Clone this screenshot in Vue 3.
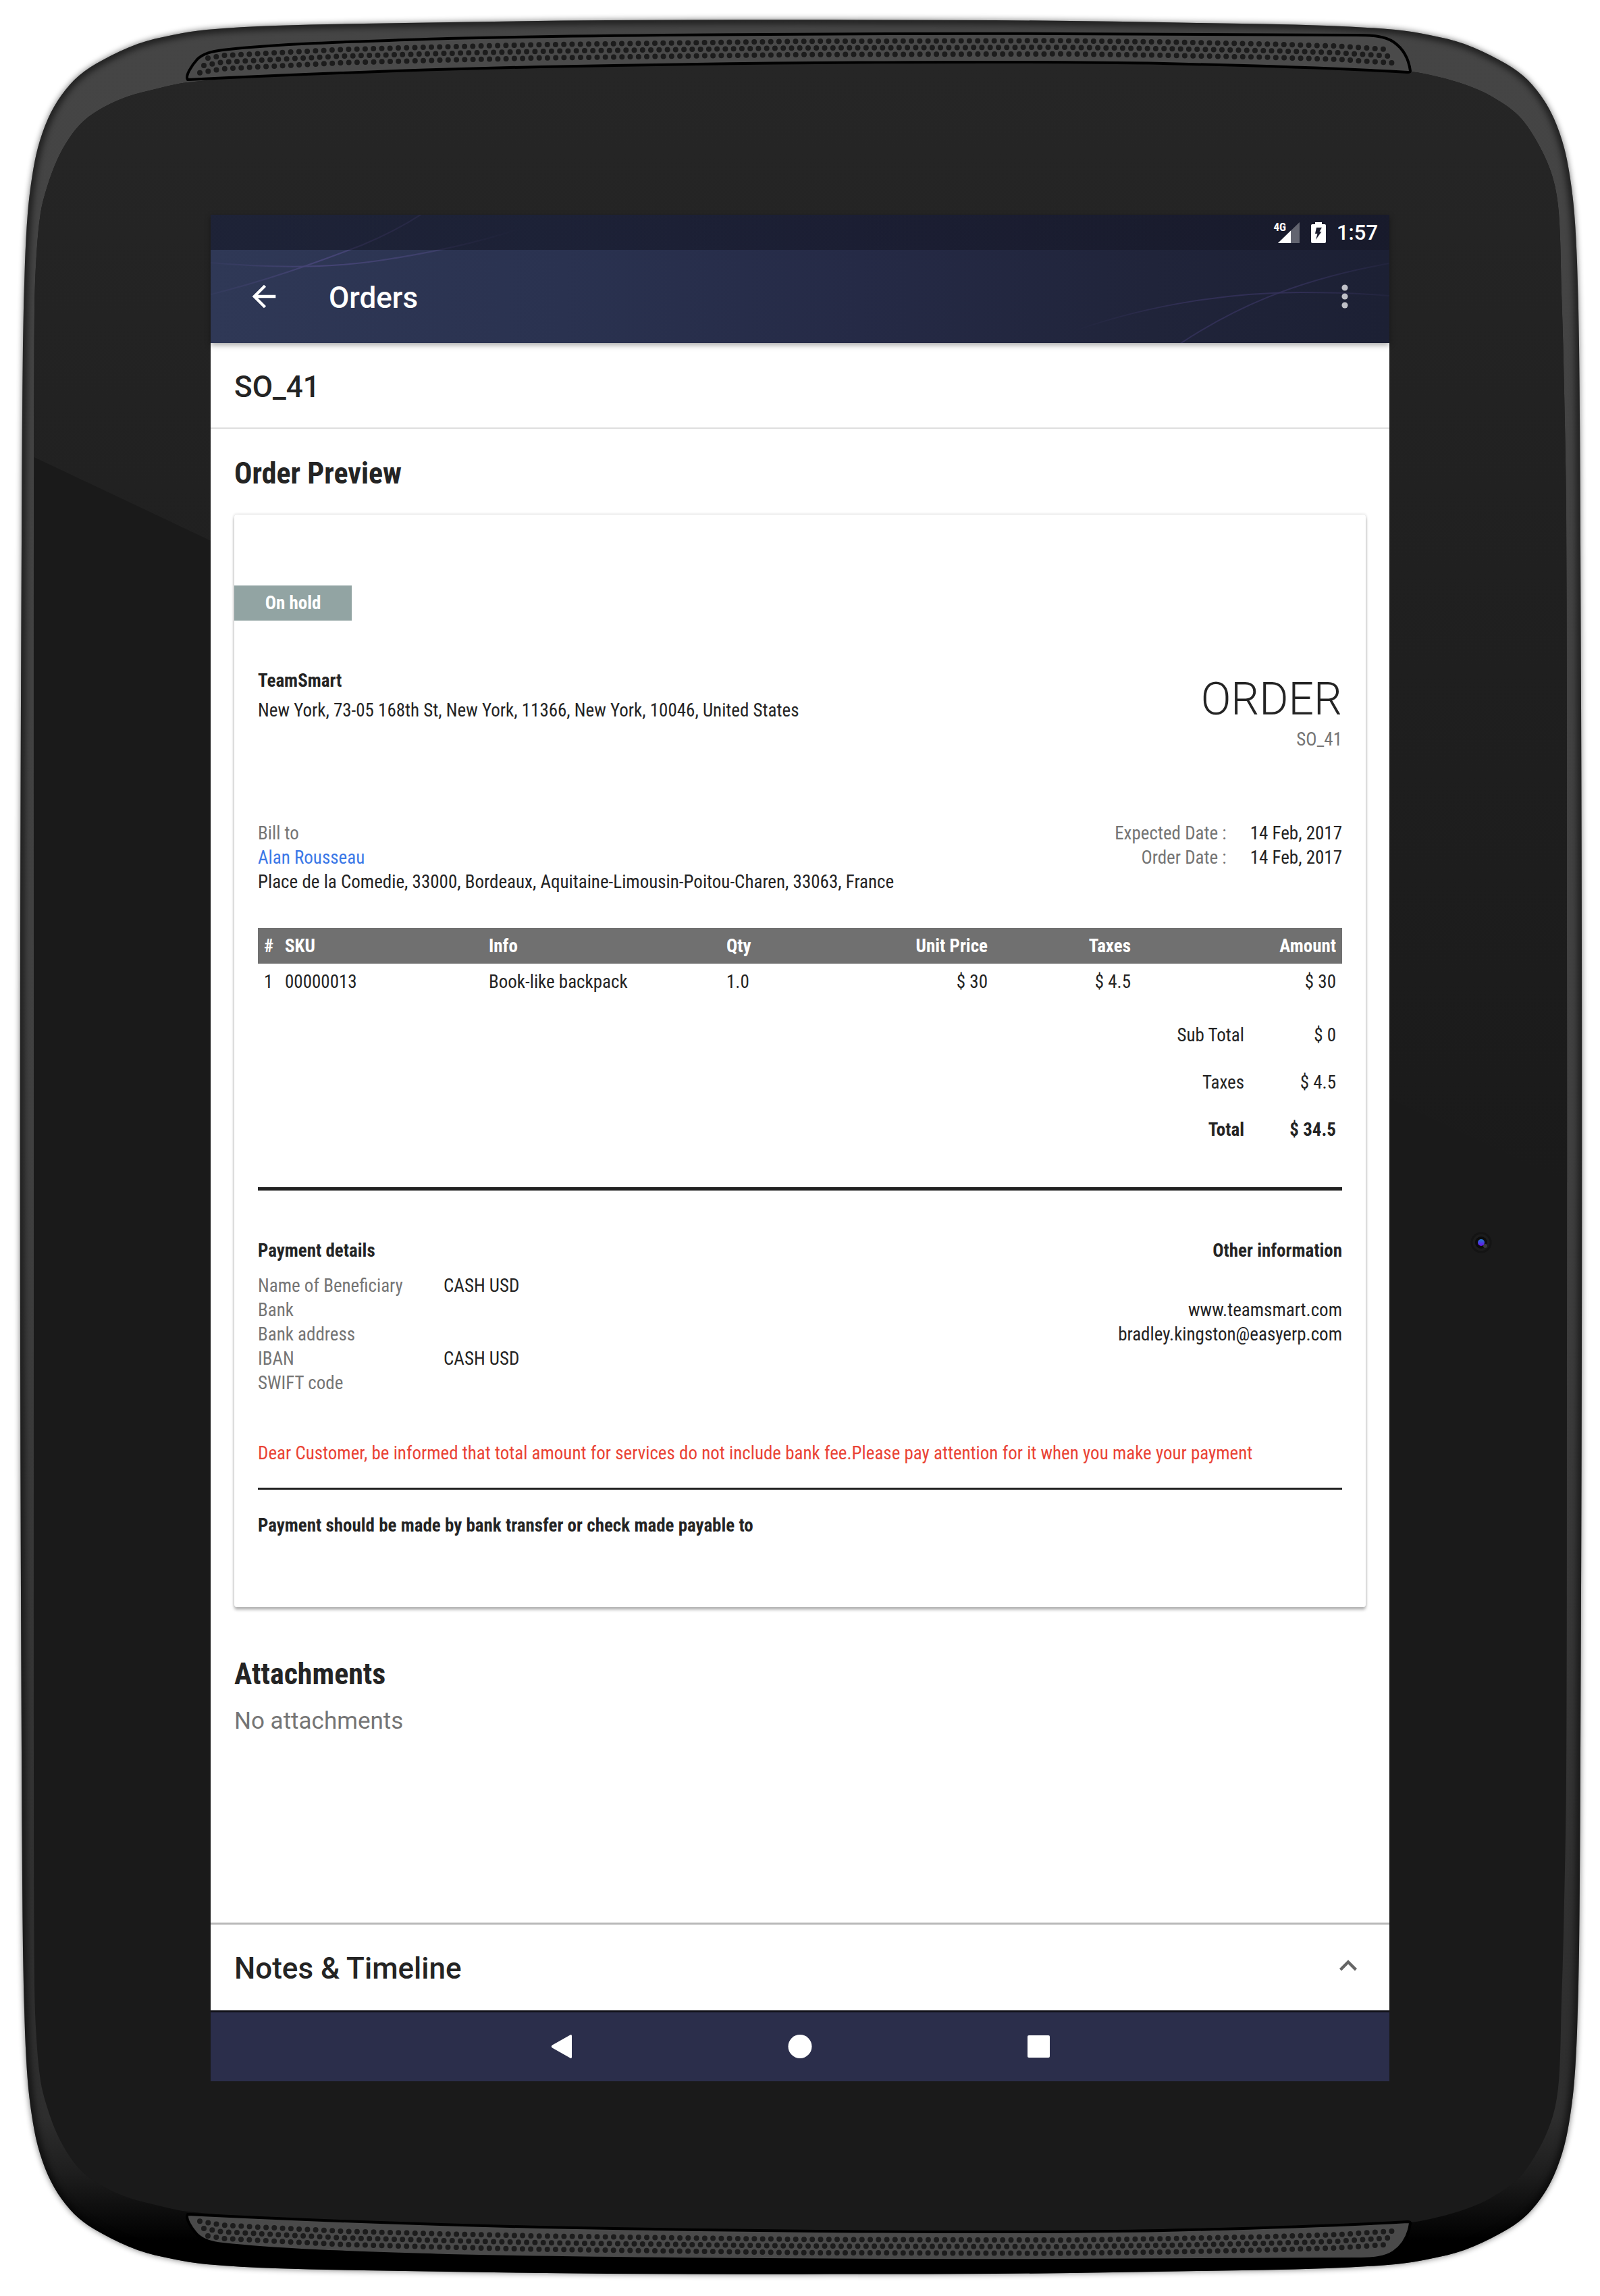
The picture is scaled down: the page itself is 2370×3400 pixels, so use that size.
<script setup>
/* ---------- order data ---------- */
const order = {
  number: 'SO_41',
  status: 'On hold',
  company: 'TeamSmart',
  companyAddress: 'New York, 73-05 168th St, New York, 11366, New York, 10046, United States',
  customer: 'Alan Rousseau',
  customerAddress: 'Place de la Comedie, 33000, Bordeaux, Aquitaine-Limousin-Poitou-Charen, 33063, France',
}

const dates = [
  { label: 'Expected Date :', value: '14 Feb, 2017' },
  { label: 'Order Date :', value: '14 Feb, 2017' },
]

const items = [
  { sku: '00000013', info: 'Book-like backpack', qty: '1.0', price: '$ 30', taxes: '$ 4.5', amount: '$ 30' },
]

const totals = [
  { label: 'Sub Total', value: '$ 0' },
  { label: 'Taxes', value: '$ 4.5' },
  { label: 'Total', value: '$ 34.5', strong: true },
]

const payment = [
  { label: 'Name of Beneficiary', value: 'CASH USD' },
  { label: 'Bank', value: '' },
  { label: 'Bank address', value: '' },
  { label: 'IBAN', value: 'CASH USD' },
  { label: 'SWIFT code', value: '' },
]

/* ---------- tablet artwork ---------- */
const W = 2373
const H = 3397

// Quarter outlines, each from the side edge's middle to the top edge's middle.
const shellQuarter = [
  [30, 1400], [32, 800], [34, 510], [37, 388], [41, 316], [47, 265], [56, 219], [71, 176], [91, 141],
  [117, 112], [152, 89], [204, 65], [255, 52], [306, 44], [408, 38], [600, 34], [900, 30],
]
const faceLeft = [
  [50, 1400], [50, 800], [51, 459], [54, 378], [60, 316], [70, 276], [85, 236], [103, 204],
  [124, 179], [153, 159], [189, 143], [230, 132], [278, 122], [408, 112], [663, 103], [900, 98],
]
const faceRight = [
  [52, 1400], [53, 765], [57, 536], [60, 434], [64, 316], [73, 263], [94, 214],
  [124, 171], [165, 142], [201, 126], [242, 114], [284, 106], [450, 100], [650, 96], [900, 92],
]

// The lower half mirrors the upper one.
function outline(left, right) {
  const topRight = right.map(([x, y]) => [W - x, y]).reverse()
  const bottomRight = right.map(([x, y]) => [W - x, H - y])
  const bottomLeft = left.map(([x, y]) => [x, H - y]).reverse()
  return [...left, ...topRight, ...bottomRight, ...bottomLeft]
}

function smoothClosed(p) {
  const n = p.length
  const f = (v) => Math.round(v * 10) / 10
  let d = `M${p[0][0]} ${p[0][1]}`
  for (let i = 0; i < n; i++) {
    const a = p[(i - 1 + n) % n]
    const b = p[i]
    const c = p[(i + 1) % n]
    const e = p[(i + 2) % n]
    const seg = Math.hypot(c[0] - b[0], c[1] - b[1])
    const tangent = (u, v) => {
      const len = Math.hypot(v[0] - u[0], v[1] - u[1]) || 1
      return [((v[0] - u[0]) / len) * seg / 3, ((v[1] - u[1]) / len) * seg / 3]
    }
    const t1 = tangent(a, c)
    const t2 = tangent(b, e)
    d += `C${f(b[0] + t1[0])} ${f(b[1] + t1[1])} ${f(c[0] - t2[0])} ${f(c[1] - t2[1])} ${c[0]} ${c[1]}`
  }
  return d + 'Z'
}

const shellPath = smoothClosed(outline(shellQuarter, shellQuarter))
const facePath = smoothClosed(outline(faceLeft, faceRight))

const grillePath =
  'M278 118C274 112 284 97 292 88C301 79 314 76 330 74C420 64 540 61 663 57C860 52 1300 49 1570 50' +
  'L2009 52C2035 52 2052 54 2064 62C2080 73 2087 90 2089 105C2089 107 2087 107 2085 107' +
  'C1980 101 1850 97 1723 94C1500 90 1150 92 800 99C620 103 440 110 278 118Z'

const spine = [[296, 98], [330, 92], [408, 88], [510, 83], [663, 79], [800, 76], [1185, 71], [1570, 70], [1723, 72], [1876, 75], [1980, 78], [2072, 84]]
function spineY(x) {
  for (let i = 1; i < spine.length; i++) {
    const [x0, y0] = spine[i - 1]
    const [x1, y1] = spine[i]
    if (x <= x1) return y0 + ((y1 - y0) * (x - x0)) / (x1 - x0)
  }
  return spine[spine.length - 1][1]
}
const holes = []
for (let i = 0; i < 145; i++) {
  const x = 296 + i * 12.26
  if (x < 2068) holes.push([x, spineY(x) + 9.8])
  if (x + 6 < 2062) holes.push([x + 6, spineY(x + 6)])
  if (x + 12 < 2056) holes.push([x + 12, spineY(x + 12) - 9.8])
}
const holesPath = holes
  .map(([x, y]) => `M${(x - 4).toFixed(1)} ${y.toFixed(1)}a4 4 0 1 0 8 0a4 4 0 1 0-8 0`)
  .join('')
</script>

<template>
  <div class="tablet">
    <svg class="shell" viewBox="0 0 2370 3400" preserveAspectRatio="none" aria-hidden="true">
      <defs>
        <linearGradient id="shellFill" x1="0" y1="0" x2="0" y2="1">
          <stop offset="0" stop-color="#454545" />
          <stop offset="0.5" stop-color="#404040" />
          <stop offset="0.85" stop-color="#303030" />
          <stop offset="0.93" stop-color="#2e2e2e" />
          <stop offset="0.955" stop-color="#1e1e1e" />
          <stop offset="0.975" stop-color="#0a0a0a" />
          <stop offset="0.985" stop-color="#000" />
        </linearGradient>
        <linearGradient id="glare" gradientUnits="userSpaceOnUse" x1="0" y1="100" x2="0" y2="1750">
          <stop offset="0" stop-color="#262626" />
          <stop offset="0.45" stop-color="#202020" />
          <stop offset="1" stop-color="#1a1a1a" />
        </linearGradient>
        <linearGradient id="lens" x1="0" y1="0" x2="0" y2="1">
          <stop offset="0" stop-color="#2277cc" />
          <stop offset="1" stop-color="#6a11ee" />
        </linearGradient>
        <clipPath id="shellClip"><path :d="shellPath" /></clipPath>
        <clipPath id="faceClip"><path :d="facePath" /></clipPath>
        <filter id="soft" x="-5%" y="-5%" width="110%" height="110%"><feGaussianBlur stdDeviation="5" /></filter>
        <filter id="edge" x="-5%" y="-5%" width="110%" height="110%"><feGaussianBlur stdDeviation="5" /></filter>
      </defs>

      <path :d="shellPath" fill="#000" opacity="0.55" filter="url(#soft)" />
      <path :d="shellPath" fill="url(#shellFill)" />
      <g clip-path="url(#shellClip)">
        <path :d="shellPath" fill="none" stroke="#000" stroke-width="12" opacity="0.55" filter="url(#edge)" />
      </g>
      <path :d="facePath" fill="#1a1a1a" />
      <path d="M0 653L2370 1774V0H0Z" fill="url(#glare)" clip-path="url(#faceClip)" />

      <g>
        <path :d="grillePath" fill="#4a4a4a" stroke="#000" stroke-width="4" />
        <path :d="holesPath" fill="#1c1c1c" />
      </g>
      <g transform="matrix(1 0 0 -1 0 3397)">
        <path :d="grillePath" fill="#4a4a4a" stroke="#000" stroke-width="4" />
        <path :d="holesPath" fill="#1c1c1c" />
      </g>

      <circle cx="2194" cy="1840" r="14" fill="#1c1c1c" stroke="#141414" stroke-width="3" />
      <circle cx="2194" cy="1840" r="9" fill="#0c0c0c" />
      <circle cx="2200" cy="1845" r="3" fill="#3a3a3a" />
      <circle cx="2194" cy="1840" r="5" fill="url(#lens)" />
    </svg>

    <div class="screen">
      <header class="top">
        <svg class="swirl" viewBox="0 0 1746 190" preserveAspectRatio="none" aria-hidden="true">
          <defs>
            <linearGradient id="fadeL" gradientUnits="userSpaceOnUse" x1="0" y1="0" x2="460" y2="0">
              <stop offset="0" stop-color="#454475" stop-opacity="0.15" />
              <stop offset="0.35" stop-color="#454475" />
              <stop offset="0.7" stop-color="#454475" stop-opacity="0.7" />
              <stop offset="1" stop-color="#454475" stop-opacity="0" />
            </linearGradient>
            <linearGradient id="fadeR" gradientUnits="userSpaceOnUse" x1="1280" y1="0" x2="1746" y2="0">
              <stop offset="0" stop-color="#35325c" stop-opacity="0" />
              <stop offset="0.35" stop-color="#35325c" stop-opacity="0.8" />
              <stop offset="0.7" stop-color="#35325c" stop-opacity="0.8" />
              <stop offset="1" stop-color="#35325c" stop-opacity="0.2" />
            </linearGradient>
          </defs>
          <g fill="none" stroke-width="2">
            <path d="M0 71C80 78 170 80 249 68C330 56 400 40 460 20" stroke="url(#fadeL)" />
            <path d="M0 118C80 98 140 77 224 45C260 30 290 14 314 -2" stroke="url(#fadeL)" />
            <path d="M1282 171C1400 130 1520 115 1615 115C1670 115 1710 117 1746 120" stroke="url(#fadeR)" />
            <path d="M1436 191C1510 142 1600 98 1746 72" stroke="url(#fadeR)" />
          </g>
        </svg>

        <div class="status-bar">
          <span class="signal">
            <span class="net">4G</span>
            <svg width="32" height="31" viewBox="0 0 32 31" aria-hidden="true">
              <path d="M32 0V31H0Z" fill="#fff" opacity="0.32" />
              <path d="M19 12.600V31H0Z" fill="#fff" />
            </svg>
          </span>
          <svg class="battery" width="22" height="31" viewBox="0 0 22 31" aria-hidden="true">
            <path d="M6 0H16V3H20Q22 3 22 5V29Q22 31 20 31H2Q0 31 0 29V5Q0 3 2 3H6Z" fill="#fff" />
            <path d="M8 8H16L12.500 14H15.500L7 26L9.500 17H6Z" fill="#1b1d2f" />
          </svg>
          <time class="clock">1:57</time>
        </div>

        <div class="app-bar">
          <button class="icon-button" type="button" aria-label="Back">
            <svg viewBox="0 0 24 24" aria-hidden="true">
              <path d="M20 11H7.830l5.590-5.590L12 4l-8 8 8 8 1.410-1.410L7.830 13H20v-2z" fill="#fff" />
            </svg>
          </button>
          <h1 class="bar-title">Orders</h1>
          <button class="icon-button" type="button" aria-label="More options">
            <svg viewBox="0 0 24 24" aria-hidden="true">
              <g fill="#bfc0c7">
                <circle cx="12" cy="6" r="2.100" /><circle cx="12" cy="12" r="2.100" /><circle cx="12" cy="18" r="2.100" />
              </g>
            </svg>
          </button>
        </div>
      </header>

      <h2 class="order-number">{{ order.number }}</h2>

      <main class="content">
        <h3 class="section-title">Order Preview</h3>

        <article class="card">
          <span class="badge">{{ order.status }}</span>

          <div class="card-body">
            <div class="split">
              <div>
                <p class="company">{{ order.company }}</p>
                <p>{{ order.companyAddress }}</p>
              </div>
              <div class="doc">
                <p class="doc-type">ORDER</p>
                <p class="muted">{{ order.number }}</p>
              </div>
            </div>

            <div class="split parties">
              <div>
                <p class="muted">Bill to</p>
                <p><a class="customer" href="#customer">{{ order.customer }}</a></p>
                <p>{{ order.customerAddress }}</p>
              </div>
              <dl class="dates">
                <template v-for="d in dates" :key="d.label">
                  <dt>{{ d.label }}</dt>
                  <dd>{{ d.value }}</dd>
                </template>
              </dl>
            </div>

            <table class="items">
              <colgroup>
                <col class="c-num" /><col class="c-sku" /><col class="c-info" /><col class="c-qty" />
                <col class="c-price" /><col class="c-taxes" /><col />
              </colgroup>
              <thead>
                <tr>
                  <th>#</th><th>SKU</th><th>Info</th><th>Qty</th>
                  <th class="num">Unit Price</th><th class="num">Taxes</th><th class="num">Amount</th>
                </tr>
              </thead>
              <tbody>
                <tr v-for="(it, i) in items" :key="it.sku">
                  <td>{{ i + 1 }}</td><td>{{ it.sku }}</td><td>{{ it.info }}</td><td>{{ it.qty }}</td>
                  <td class="num">{{ it.price }}</td><td class="num">{{ it.taxes }}</td><td class="num">{{ it.amount }}</td>
                </tr>
              </tbody>
            </table>

            <dl class="totals">
              <div v-for="t in totals" :key="t.label" class="total-row" :class="{ strong: t.strong }">
                <dt>{{ t.label }}</dt>
                <dd>{{ t.value }}</dd>
              </div>
            </dl>

            <hr class="rule thick" />

            <div class="split">
              <div>
                <p class="block-title">Payment details</p>
                <dl class="payment">
                  <template v-for="p in payment" :key="p.label">
                    <dt>{{ p.label }}</dt>
                    <dd>{{ p.value }}</dd>
                  </template>
                </dl>
              </div>
              <div class="other">
                <p class="block-title">Other information</p>
                <a class="contact" href="#website">www.teamsmart.com</a>
                <a class="contact" href="#email">bradley.kingston@easyerp.com</a>
              </div>
            </div>

            <p class="notice">Dear Customer, be informed that total amount for services do not include bank fee.Please pay attention for it when you make your payment</p>
            <hr class="rule" />
            <p class="payable">Payment should be made by bank transfer or check made payable to</p>
          </div>
        </article>

        <h3 class="section-title attachments">Attachments</h3>
        <p class="empty">No attachments</p>
      </main>

      <button class="notes" type="button">
        <span class="notes-label">Notes &amp; Timeline</span>
        <svg viewBox="0 0 24 24" aria-hidden="true">
          <path d="M12 8l-6 6 1.410 1.410L12 10.830l4.590 4.580L18 14z" fill="#666" />
        </svg>
      </button>

      <nav class="nav">
        <button class="icon-button" type="button" aria-label="System back">
          <svg viewBox="0 0 52 52" aria-hidden="true">
            <path d="M41 10V41Q41 44 38.500 42.500L12 27.500Q9.500 25.500 12 23.500L38.500 8.500Q41 7 41 10Z" fill="#fff" />
          </svg>
        </button>
        <button class="icon-button" type="button" aria-label="Home">
          <svg viewBox="0 0 52 52" aria-hidden="true"><circle cx="26" cy="25.500" r="17.500" fill="#fff" /></svg>
        </button>
        <button class="icon-button" type="button" aria-label="Recent apps">
          <svg viewBox="0 0 52 52" aria-hidden="true"><rect x="10" y="9" width="33" height="33" rx="2" fill="#fff" /></svg>
        </button>
      </nav>
    </div>
  </div>
</template>

<style>
body {
  margin: 0;
  background: #fff;
}
</style>

<style scoped>
.tablet {
  position: relative;
  box-sizing: border-box;
  padding: 318px 312px;
  font-family: Roboto, "Liberation Sans", sans-serif;
  color: #242424;
}

.shell {
  position: absolute;
  inset: 0;
  width: 100%;
  height: 100%;
}

.screen {
  position: relative;
  display: flex;
  flex-direction: column;
  background: #fff;
}

h1, h2, h3, p, dl, dd {
  margin: 0;
  font-weight: 400;
}

button {
  border: 0;
  padding: 0;
  background: none;
  font: inherit;
  color: inherit;
  cursor: pointer;
}

/* header */
.top {
  position: relative;
  z-index: 1;
  background: linear-gradient(90deg, #2f3856 0%, #2a3250 30%, #252a46 55%, #20243a 80%, #1c2034 100%);
  box-shadow: 0 3px 8px rgba(0, 0, 0, 0.35);
}

.swirl {
  position: absolute;
  inset: 0;
  width: 100%;
  height: 100%;
}

.status-bar {
  position: relative;
  display: flex;
  align-items: center;
  justify-content: flex-end;
  height: 52px;
  padding-right: 17px;
  background: linear-gradient(90deg, rgba(8, 8, 16, 0.45), rgba(16, 16, 28, 0.35));
  color: #fff;
}

.signal {
  position: relative;
  display: flex;
}

.net {
  position: absolute;
  right: 20px;
  top: 0;
  font: 700 17px/14px "Roboto Condensed", Roboto, sans-serif;
}

.battery {
  margin: 0 16px 0 17px;
}

.clock {
  padding-top: 2px;
  font-size: 31px;
  line-height: 50px;
  font-weight: 500;
}

.app-bar {
  position: relative;
  display: flex;
  align-items: center;
  height: 138px;
  padding: 0 40px 0 53px;
}

.icon-button {
  display: flex;
  width: 52px;
  height: 52px;
}

.icon-button svg {
  width: 100%;
  height: 100%;
}

.bar-title {
  flex: 1;
  padding: 4px 0 0 70px;
  color: #fff;
  font-size: 44px;
  line-height: 52px;
  font-weight: 500;
}

.order-number {
  padding: 39px 35px 34px;
  border-bottom: 2px solid #dedede;
  font-size: 44px;
  line-height: 52px;
  font-weight: 500;
}

/* content */
.content {
  padding: 40px 35px 276px;
}

.section-title {
  font-family: "Roboto Condensed", Roboto, sans-serif;
  font-size: 44px;
  line-height: 52px;
  font-weight: 700;
}

.card {
  margin-top: 35px;
  padding: 105px 0 103px;
  border-radius: 4px;
  background: #fff;
  box-shadow: 0 4px 4px rgba(0, 0, 0, 0.26), 0 0 4px rgba(0, 0, 0, 0.2);
  font-family: "Roboto Condensed", Roboto, sans-serif;
  font-size: 27px;
  line-height: 36px;
}

.badge {
  display: block;
  width: 174px;
  background: #92a4a3;
  color: #fff;
  font-weight: 700;
  line-height: 52px;
  text-align: center;
}

.card-body {
  padding: 71px 35px 0;
}

.split {
  display: flex;
  justify-content: space-between;
}

.company,
.block-title,
.payable {
  font-weight: 700;
}

.company {
  margin-bottom: 8px;
}

.muted,
dt {
  color: #757575;
}

.doc {
  padding-top: 8px;
  text-align: right;
}

.doc-type {
  margin-bottom: 3px;
  font-family: Roboto, sans-serif;
  font-size: 66px;
  line-height: 76px;
  font-weight: 300;
}

.parties {
  margin-top: 103px;
}

.customer {
  color: #3b78e7;
  text-decoration: none;
}

.dates {
  display: grid;
  grid-template-columns: auto auto;
  column-gap: 35px;
  align-content: start;
  text-align: right;
}

.items {
  width: 100%;
  margin-top: 50px;
  border-collapse: collapse;
  table-layout: fixed;
}

.c-num { width: 31px; }
.c-sku { width: 302px; }
.c-info { width: 352px; }
.c-qty { width: 160px; }
.c-price { width: 245px; }
.c-taxes { width: 212px; }

.items th,
.items td {
  height: 53px;
  padding: 0 9px;
  text-align: left;
  white-space: nowrap;
}

.items th {
  background: #707070;
  color: #fff;
  font-weight: 700;
}

.items .num {
  text-align: right;
}

.totals {
  margin-top: 18px;
}

.total-row {
  display: flex;
  justify-content: flex-end;
  padding: 0 9px;
  line-height: 70px;
}

.total-row dt {
  color: inherit;
}

.total-row dd {
  width: 136px;
  text-align: right;
}

.strong {
  font-weight: 700;
}

.strong dd {
  font-weight: 700;
}

.rule {
  margin: 33px 0 35px;
  border: 0;
  border-top: 3px solid #212121;
}

.thick {
  margin: 50px 0 71px;
  border-top-width: 5px;
}

.block-title {
  margin-bottom: 16px;
}

.payment {
  display: grid;
  grid-template-columns: 275px auto;
  grid-auto-rows: 36px;
}

.other {
  text-align: right;
}

.other .block-title {
  margin-bottom: 52px;
}

.contact {
  display: block;
  color: inherit;
  text-decoration: none;
}

.notice {
  margin-top: 68px;
  color: #ea4335;
}

.attachments {
  margin-top: 73px;
}

.empty {
  margin-top: 22px;
  color: #757575;
  font-size: 35px;
  line-height: 44px;
}

/* bottom */
.notes {
  display: flex;
  align-items: flex-start;
  justify-content: space-between;
  padding: 35px 35px 36px;
  border-top: 3px solid #b8b8b8;
  font-size: 44px;
  line-height: 52px;
  font-weight: 500;
  text-align: left;
}

.notes-label {
  padding-top: 4px;
}

.notes svg {
  width: 52px;
  height: 52px;
}

.nav {
  display: flex;
  align-items: center;
  justify-content: center;
  gap: 301px;
  height: 102px;
  border-top: 3px solid #101018;
  background: #2b2e4b;
}
</style>
